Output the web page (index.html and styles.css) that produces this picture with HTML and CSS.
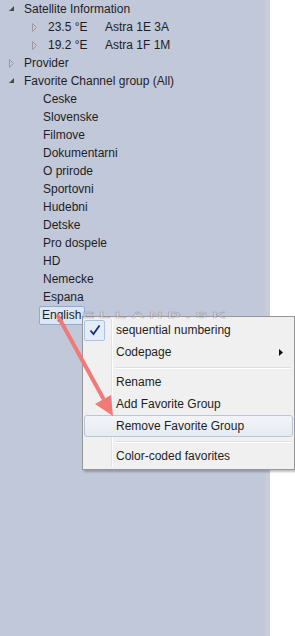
FILE: index.html
```html
<!doctype html>
<html lang="en">
  <head>
    <meta charset="UTF-8" />
    <title>Channel tree</title>
    <link rel="stylesheet" href="styles.css">
  </head>
  <body>
    <div class="panel">
      <div class="tree">
        <div class="row lvl0">
          <span class="exp"><svg width="8" height="8" viewBox="0 0 8 8"><polygon points="6,1 6,6 1,6" fill="#4a4a4a"/></svg></span>
          <span>Satellite Information</span>
        </div>
        <div class="row lvl1">
          <span class="exp"><svg width="8" height="9" viewBox="0 0 8 9"><polygon points="1.5,0.5 5.5,4.5 1.5,8.5" fill="none" stroke="#9a9a9a"/></svg></span>
          <span class="pos">23.5 °E</span><span>Astra 1E 3A</span>
        </div>
        <div class="row lvl1">
          <span class="exp"><svg width="8" height="9" viewBox="0 0 8 9"><polygon points="1.5,0.5 5.5,4.5 1.5,8.5" fill="none" stroke="#9a9a9a"/></svg></span>
          <span class="pos">19.2 °E</span><span>Astra 1F 1M</span>
        </div>
        <div class="row lvl0">
          <span class="exp"><svg width="8" height="9" viewBox="0 0 8 9"><polygon points="1.5,0.5 5.5,4.5 1.5,8.5" fill="none" stroke="#9a9a9a"/></svg></span>
          <span>Provider</span>
        </div>
        <div class="row lvl0">
          <span class="exp"><svg width="8" height="8" viewBox="0 0 8 8"><polygon points="6,1 6,6 1,6" fill="#4a4a4a"/></svg></span>
          <span>Favorite Channel group (All)</span>
        </div>
        <div class="row lvl2"><span>Ceske</span></div>
        <div class="row lvl2"><span>Slovenske</span></div>
        <div class="row lvl2"><span>Filmove</span></div>
        <div class="row lvl2"><span>Dokumentarni</span></div>
        <div class="row lvl2"><span>O prirode</span></div>
        <div class="row lvl2"><span>Sportovni</span></div>
        <div class="row lvl2"><span>Hudebni</span></div>
        <div class="row lvl2"><span>Detske</span></div>
        <div class="row lvl2"><span>Pro dospele</span></div>
        <div class="row lvl2"><span>HD</span></div>
        <div class="row lvl2"><span>Nemecke</span></div>
        <div class="row lvl2"><span>Espana</span></div>
        <div class="row lvl2"><span class="selected">English</span></div>
      </div>
    </div>

    <div class="menu">
      <div class="item">
        <span class="icon"><span class="checkbox"><svg width="12" height="12" viewBox="0 0 12 12"><path d="M1.5 6.5 L4.5 10 L10.5 1.5" fill="none" stroke="#1c2a80" stroke-width="1.8"/></svg></span></span>
        <span class="label">sequential numbering</span>
      </div>
      <div class="item">
        <span class="icon"></span>
        <span class="label">Codepage</span>
        <svg class="sub" width="4" height="7" viewBox="0 0 4 7"><polygon points="0,0 4,3.5 0,7" fill="#111"/></svg>
      </div>
      <div class="sep"><span class="icon"></span><span class="line"></span></div>
      <div class="item">
        <span class="icon"></span>
        <span class="label">Rename</span>
      </div>
      <div class="item">
        <span class="icon"></span>
        <span class="label">Add Favorite Group</span>
      </div>
      <div class="item hot">
        <span class="icon"></span>
        <span class="label">Remove Favorite Group</span>
      </div>
      <div class="sep"><span class="icon"></span><span class="line"></span></div>
      <div class="item">
        <span class="icon"></span>
        <span class="label">Color-coded favorites</span>
      </div>
    </div>

    <div class="watermark">ELLAND.SK</div>

    <svg class="arrow" width="295" height="636" viewBox="0 0 295 636">
      <line x1="58" y1="316" x2="103" y2="398" stroke="#f07a78" stroke-width="4" stroke-linecap="round"/>
      <polygon points="113,416 95,404 111,395" fill="#f07a78"/>
    </svg>
  </body>
</html>
```

FILE: styles.css
```css
body {
  margin: 0;
  width: 295px;
  height: 636px;
  overflow: hidden;
  background: white;
  font-family: 'Liberation Sans', Arial, sans-serif;
  font-size: 12px;
  color: #1e1e1e;
}
.panel {
  width: 270px;
  height: 636px;
  background: linear-gradient(to right, #c1c8da 264px, #c4ccd0 264px, #c4ccd0 266px, #c9cae3 266px);
}
.tree {
  display: flex;
  flex-direction: column;
}
.row {
  display: flex;
  align-items: center;
  height: 18px;
  white-space: nowrap;
}
.exp {
  display: flex;
  align-items: center;
  width: 16px;
}
.lvl0 {
  padding-left: 8px;
}
.lvl1 {
  padding-left: 31px;
}
.lvl1 .exp {
  width: 17px;
}
.lvl2 {
  padding-left: 40px;
}
.lvl2 span {
  padding: 0 3px;
}
.pos {
  width: 57px;
}
.selected {
  height: 17px;
  line-height: 17px;
  background: #dbe7f6;
  border: 1px solid #8aabd6;
  border-radius: 2px;
  padding: 0 3px 0 2px !important;
  margin-left: -1px;
}
.menu {
  position: absolute;
  left: 82px;
  top: 316px;
  width: 211px;
  padding: 2px 0;
  background: #f0f0f0;
  border: 1px solid #979797;
  box-shadow: 2px 2px 2px rgba(0, 0, 0, 0.25);
  display: flex;
  flex-direction: column;
}
.item {
  display: flex;
  align-items: center;
  height: 22px;
  margin: 0 1px;
  position: relative;
}
.icon {
  width: 27px;
  height: 100%;
  display: flex;
  align-items: center;
  border-right: 1px solid #e2e3e3;
  box-shadow: 1px 0 0 #fff;
  margin-right: 4px;
}
.checkbox {
  width: 21px;
  height: 21px;
  display: flex;
  align-items: center;
  justify-content: center;
  background: #e4ecf6;
  border: 1px solid #a9c3e0;
  border-radius: 2px;
  box-sizing: border-box;
}
.label {
  flex: 1;
}
.sub {
  margin-right: 10px;
}
.hot {
  background: linear-gradient(to bottom, #f2f4f8, #e6ebf2);
  border: 1px solid #b7c6d9;
  border-radius: 3px;
  height: 20px;
  margin: 0 1px;
}
.hot .icon {
  border-right-color: transparent;
  box-shadow: none;
  width: 26px;
  margin-right: 4px;
}
.sep {
  display: flex;
  height: 8px;
  margin: 0 1px;
  align-items: stretch;
}
.sep .icon {
  margin-right: 3px;
}
.sep .line {
  flex: 1;
  align-self: center;
  height: 1px;
  background: #e0e0e0;
  box-shadow: 0 1px 0 #fff;
  margin-right: 2px;
}
.watermark {
  position: absolute;
  left: 82px;
  top: 309px;
  font-size: 11px;
  font-weight: bold;
  letter-spacing: 3px;
  color: rgba(255, 255, 255, 0.3);
  -webkit-text-stroke: 0.5px rgba(120, 120, 130, 0.55);
  transform: scale(1.65, 0.85);
  transform-origin: left top;
}
.arrow {
  position: absolute;
  left: 0;
  top: 0;
  pointer-events: none;
}
```
